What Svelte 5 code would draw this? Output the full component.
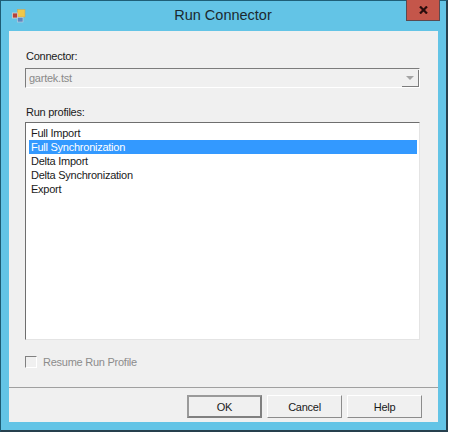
<script>
    let profiles = ["Full Import", "Full Synchronization", "Delta Import", "Delta Synchronization", "Export"];
    let selected = 1;
</script>

<div class="window">
    <div class="titlebar">
        <svg class="app-icon" width="14" height="14" viewBox="0 0 14 14">
            <rect x="5.5" y="0.5" width="7.5" height="7.5" fill="#f0c84a" stroke="#c9a85a" stroke-width="0.6" />
            <rect x="0.5" y="4" width="5" height="5" fill="#b5413c" stroke="#d8d0c8" stroke-width="0.8" />
            <rect x="5.5" y="8.5" width="5.5" height="4.5" fill="#5f86c0" stroke="#c8d0dc" stroke-width="0.6" />
        </svg>
        <span class="title">Run Connector</span>
        <div class="close">
            <svg width="9" height="8" viewBox="0 0 9 8">
                <path d="M1 0.5 L8 7.5 M8 0.5 L1 7.5" stroke="#2a0d0d" stroke-width="2.2" fill="none" />
            </svg>
        </div>
    </div>

    <div class="client">
        <div class="main">
            <div class="label">Connector:</div>
            <div class="combo">
                <span>gartek.tst</span>
                <div class="combo-btn"><i class="arrow"></i></div>
            </div>

            <div class="label profiles-label">Run profiles:</div>
            <ul class="list">
                {#each profiles as profile, i}
                    <li class:selected={i === selected}>{profile}</li>
                {/each}
            </ul>

            <div class="resume">
                <span class="check"></span>
                <span>Resume Run Profile</span>
            </div>
        </div>

        <div class="footer">
            <button class="default">OK</button>
            <button>Cancel</button>
            <button>Help</button>
        </div>
    </div>
</div>

<style>
    :global(body) {
        background: #fff;
    }

    .window {
        width: 448px;
        height: 432px;
        box-sizing: border-box;
        display: flex;
        flex-direction: column;
        padding: 0 8px 8px 8px;
        background: #63c4e6;
        border-top: 1px solid #1f5f78;
        border-left: 1px solid #1d5c74;
        border-right: 2px solid #26404e;
        border-bottom: 2px solid #26404e;
        font-family: "Liberation Sans", Arial, sans-serif;
        font-size: 11px;
        letter-spacing: -0.25px;
        color: #1a1a1a;
    }

    .titlebar {
        height: 30px;
        flex: none;
        display: flex;
        align-items: center;
        justify-content: center;
        position: relative;
    }

    .app-icon {
        position: absolute;
        left: 3px;
        top: 8px;
    }

    .title {
        font-size: 14.5px;
        letter-spacing: 0;
        color: #1c2a30;
        margin-top: -2px;
        margin-left: -1px;
    }

    .close {
        position: absolute;
        right: -2px;
        top: -1px;
        width: 34px;
        height: 21px;
        background: #c4564a;
        border: 1px solid #5a4a50;
        border-top: none;
        box-sizing: border-box;
        display: flex;
        align-items: center;
        justify-content: center;
    }

    .client {
        flex: 1;
        display: flex;
        flex-direction: column;
        background: #f0f0f0;
    }

    .main {
        flex: 1;
        padding: 18px 18px 0 16px;
        border-bottom: 1px solid #a0a0a0;
    }

    .label {
        height: 15px;
        line-height: 15px;
        margin-left: 1px;
    }

    .combo {
        margin-top: 4px;
        height: 20px;
        box-sizing: border-box;
        display: flex;
        align-items: center;
        justify-content: space-between;
        padding-left: 3px;
        color: #8a8a8a;
        border: 1px solid #fff;
        border-top: 1px solid #7c7c7c;
        border-left: 1px solid #7c7c7c;
    }

    .combo-btn {
        width: 17px;
        height: 17px;
        box-sizing: border-box;
        border-right: 1px solid #7c7c7c;
        border-bottom: 1px solid #7c7c7c;
        display: flex;
        align-items: center;
        justify-content: center;
    }

    .arrow {
        border-left: 4px solid transparent;
        border-right: 4px solid transparent;
        border-top: 4px solid #a4a4a4;
    }

    .profiles-label {
        margin-top: 17px;
    }

    .list {
        list-style: none;
        margin: 2px 0 0 0;
        height: 218px;
        box-sizing: border-box;
        padding: 3px 2px 0 3px;
        background: #fff;
        border: 1px solid #e4e4e4;
        border-top: 1px solid #6e6e6e;
        border-left: 1px solid #6e6e6e;
    }

    .list li {
        height: 14px;
        line-height: 14px;
        padding-left: 2px;
    }

    .list li.selected {
        background: #3399ff;
        color: #fff;
    }

    .resume {
        margin-top: 16px;
        display: flex;
        align-items: center;
        gap: 6px;
        color: #8c8c8c;
    }

    .check {
        width: 12px;
        height: 12px;
        box-sizing: border-box;
        border: 1px solid #fff;
        border-top: 1px solid #808080;
        border-left: 1px solid #808080;
    }

    .footer {
        height: 34px;
        flex: none;
        display: flex;
        justify-content: flex-end;
        gap: 5px;
        padding: 7px 16px 0 0;
        box-sizing: border-box;
    }

    button {
        width: 75px;
        height: 23px;
        font: inherit;
        letter-spacing: inherit;
        color: inherit;
        padding: 0;
        background: #f0f0f0;
        border: 1px solid #fff;
        border-right: 1px solid #8c8c8c;
        border-bottom: 1px solid #8c8c8c;
    }

    button.default {
        border: 2px solid #808080;
        border-top-color: #9a9a9a;
        border-left-color: #9a9a9a;
    }
</style>
